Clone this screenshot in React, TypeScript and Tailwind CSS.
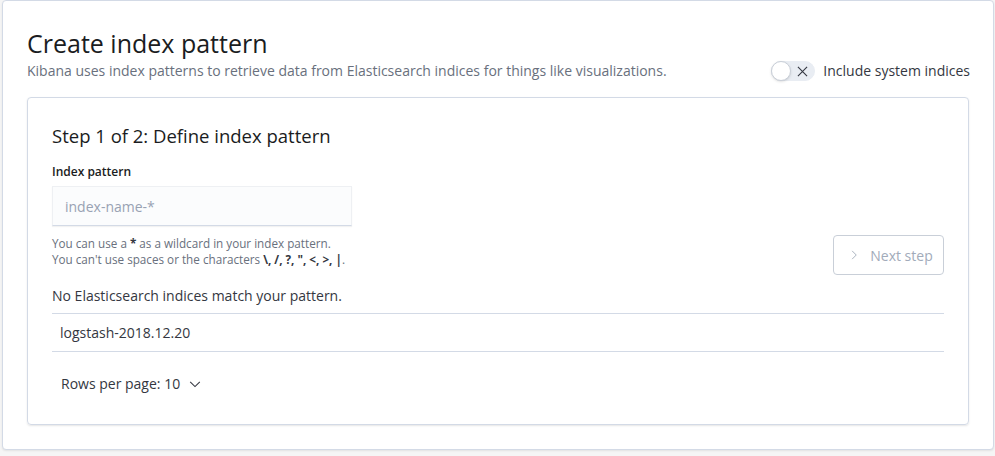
import React from 'react'

const ChevronRight = () => (
  <svg width="12" height="12" viewBox="0 0 16 16" fill="none" stroke="currentColor" strokeWidth="1.2">
    <path d="M5.5 2.5 11 8l-5.5 5.5" />
  </svg>
)

const ChevronDown = () => (
  <svg width="14" height="14" viewBox="0 0 16 16" fill="none" stroke="currentColor" strokeWidth="1.2">
    <path d="M2.5 5.5 8 11l5.5-5.5" />
  </svg>
)

const Toggle = () => (
  <div className="relative w-[44px] h-[20px] rounded-full bg-[#e9edf3] border border-[#e9edf3]">
    <div className="absolute -left-px -top-px w-[20px] h-[20px] rounded-full bg-white border border-[#c9cfd8] shadow-sm" />
    <svg className="absolute left-[25px] top-[4px]" width="11" height="11" viewBox="0 0 12 12" stroke="#343741" strokeWidth="1.2">
      <path d="M1 1l10 10M11 1 1 11" />
    </svg>
  </div>
)

const App = () => {
  return (
    <div className="w-[995px] h-[456px] bg-[#f5f5f5] font-['Open_Sans',sans-serif] text-[#343741]">
      <div className="ml-[2px] w-[992px] h-[450px] bg-white border border-[#d3dae6] rounded-[4px] shadow-[0_1px_2px_rgba(0,0,0,0.08)] px-[24px] pt-[26px]">
        <h1 className="text-[25px] leading-[32px] font-medium text-[#1a1c21]">Create index pattern</h1>
        <div className="flex items-center justify-between mt-[1px]">
          <p className="text-[14px] leading-[22px] text-[#69707d]">
            Kibana uses index patterns to retrieve data from Elasticsearch indices for things like visualizations.
          </p>
          <div className="flex items-center gap-[8px] mr-[-1px]">
            <Toggle />
            <span className="text-[14px] leading-[22px]">Include system indices</span>
          </div>
        </div>
        <div className="mt-[15px] h-[328px] border border-[#d3dae6] rounded-[4px] shadow-[0_1px_2px_rgba(0,0,0,0.1)] px-[24px] pt-[26px]">
          <h2 className="text-[18.5px] leading-[24px] font-medium text-[#1a1c21]">Step 1 of 2: Define index pattern</h2>
          <div className="flex justify-between items-end">
            <div>
              <div className="mt-[14px] text-[12px] leading-[20px] font-semibold text-[#1a1c21]">Index pattern</div>
              <div className="mt-[4px] w-[300px] h-[40px] bg-[#fbfcfd] border border-[#eef0f3] border-b-[#d3dae6] shadow-[0_1px_1px_rgba(0,0,0,0.05)] flex items-center px-[12px] text-[14px] text-[#98a2b3]">
                index-name-*
              </div>
              <div className="mt-[9px] text-[11.7px] leading-[16px] text-[#69707d]">
                <div>You can use a <b className="font-bold text-[#343741]">*</b> as a wildcard in your index pattern.</div>
                <div>
                  You can't use spaces or the characters <b className="font-bold text-[#343741]">\, /, ?, ", &lt;, &gt;, |</b>.
                </div>
              </div>
            </div>
            <button
              type="button"
              disabled
              className="mb-[-8px] w-[111px] h-[40px] pl-[4px] flex items-center justify-center gap-[10px] border border-[#c9cfd8] rounded-[4px] text-[14px] text-[#a2abba]"
            >
              <ChevronRight />
              <span>Next step</span>
            </button>
          </div>
          <p className="mt-[18px] text-[14px] leading-[22px]">No Elasticsearch indices match your pattern.</p>
          <div className="mt-[6px] border-t border-b border-[#d3dae6] h-[39px] flex items-center px-[8px] text-[14px]">
            logstash-2018.12.20
          </div>
          <div className="mt-[21px] pl-[9px] flex items-center gap-[8px] text-[14px]">
            <span>Rows per page: 10</span>
            <ChevronDown />
          </div>
        </div>
      </div>
    </div>
  )
}

export default App
